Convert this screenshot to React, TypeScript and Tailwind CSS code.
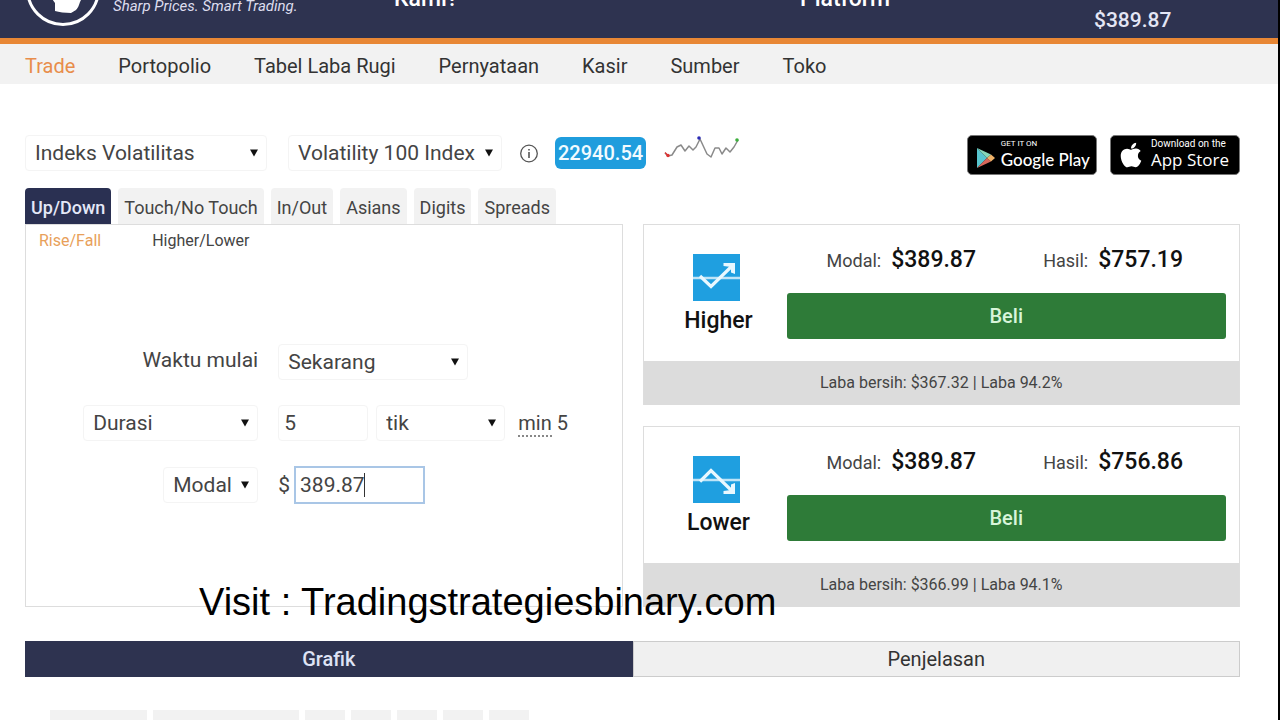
import { ReactNode } from 'react'
import clsx from 'clsx'
import { FaApple } from 'react-icons/fa'

const navigation = ['Trade', 'Portopolio', 'Tabel Laba Rugi', 'Pernyataan', 'Kasir', 'Sumber', 'Toko']

const contractTabs = ['Up/Down', 'Touch/No Touch', 'In/Out', 'Asians', 'Digits', 'Spreads']

const contracts = [
  { name: 'Higher', stake: '$389.87', payout: '$757.19', profit: '$367.32', percent: '94.2%' },
  { name: 'Lower', stake: '$389.87', payout: '$756.86', profit: '$366.99', percent: '94.1%' },
]

const chartTools = [
  { name: 'Interval', width: 'w-[97px]' },
  { name: 'Chart type', width: 'w-[146px]' },
  { name: 'Indicators', width: 'w-10' },
  { name: 'Overlay', width: 'w-10' },
  { name: 'Draw', width: 'w-10' },
  { name: 'Export', width: 'w-10' },
  { name: 'Table', width: 'w-10' },
]

function Select({ id, label, value, className }: { id: string; label: string; value: string; className: string }) {
  return (
    <div className={clsx('relative', className)}>
      <select
        id={id}
        aria-label={label}
        className="block h-9 w-full appearance-none rounded-sm border border-[#f4f4f4] bg-white pl-[9px] pr-6 text-[21px] leading-8 text-[#444] outline-none"
      >
        <option>{value}</option>
      </select>
      <svg className="pointer-events-none absolute right-[9px] top-[14px] h-2 w-2" viewBox="0 0 8 8">
        <path d="M0 0.5h8L4 7.5z" fill="#111" />
      </svg>
    </div>
  )
}

function Logo() {
  return (
    <svg className="h-[74px] w-[74px] shrink-0" viewBox="0 0 74 74" fill="none">
      <circle cx="37" cy="37" r="35.5" stroke="#fff" strokeWidth="3" />
      <path
        d="M22 30c8-6 30-6 35 4-1 8-1 13-3 16-1 3-2 6-4 8l-5 3c-6 0-12-1-16-2l0-8c-4-5-7-12-7-21z"
        fill="#fff"
      />
    </svg>
  )
}

function Sparkline() {
  return (
    <svg className="h-6 w-[76px]" viewBox="0 0 76 24" fill="none">
      <path
        d="M1 18l3 3 4-1 5-8 4-2 4 6 4-5 4 4 3-3 4-8 7 15 4 3 4-9 4 0 3 6 4-6 4 4 4-5 4-7"
        stroke="#8a8a8a"
        strokeWidth="1.5"
        strokeLinejoin="round"
      />
      <path d="M1 17.5l3 3" stroke="#d33" strokeWidth="1.3" />
      <circle cx="4" cy="20.5" r="1.7" fill="#d33" />
      <circle cx="35" cy="3" r="1.8" fill="#2b2bb5" />
      <circle cx="73" cy="5" r="1.8" fill="#3cae3c" />
    </svg>
  )
}

function ContractIcon({ name }: { name: string }) {
  return (
    <svg className="mr-1 h-[47px] w-[47px]" viewBox="0 0 47 47" fill="none">
      <path d="M0 0h47v47H0z" fill="#1f9fe0" />
      <path d="M0 24h47" stroke="#bfe4f7" strokeWidth="2.4" />
      {name === 'Higher' ? (
        <>
          <path d="M7 22l11 10.5L39 12" stroke="#e9f8ff" strokeWidth="3.2" />
          <path d="M30.500 9H42v11l-4-1.500V13l-7.500-1z" fill="#e9f8ff" />
        </>
      ) : (
        <>
          <path d="M7 25.500l11-11L39 35" stroke="#e9f8ff" strokeWidth="3.2" />
          <path d="M30.500 38H42V27l-4 1.500V34l-7.500 1z" fill="#e9f8ff" />
        </>
      )}
    </svg>
  )
}

function StoreLink({ caption, name, captionClass, nameClass, children }: { caption: string; name: string; captionClass: string; nameClass: string; children: ReactNode }) {
  return (
    <a href="#" className="flex h-10 items-center rounded-[5px] border border-[#777] bg-black text-white">
      {children}
      <span className="flex flex-col">
        <span className={captionClass}>{caption}</span>
        <span className={nameClass}>{name}</span>
      </span>
    </a>
  )
}

export default function App() {
  return (
    <div className="relative h-screen overflow-hidden border-r-2 border-black bg-white font-[Roboto,sans-serif] text-[#333]">
      <header className="flex h-11 items-end overflow-hidden border-b-6 border-[#e88735] bg-[#2e3350] text-white">
        <div className="flex w-[394px] shrink-0 items-end pb-3 pl-[26px]">
          <Logo />
          <p className="pb-3 pl-[13px] text-[15px] leading-4 italic text-[#dde]">Sharp Prices. Smart Trading.</p>
        </div>
        <a href="#" className="w-[406px] pb-[25px] text-[23px] leading-7 font-medium">Kami?</a>
        <a href="#" className="w-[294px] pb-[25px] text-[23px] leading-7 font-medium">Platform</a>
        <span className="pb-[6px] text-[21px] leading-6 font-medium text-[#e4e6f5]">$389.87</span>
      </header>

      <nav className="flex gap-[43px] bg-[#f2f2f2] px-[25px] pt-2 pb-1">
        {navigation.map((item) => (
          <a
            key={item}
            href="#"
            className={clsx('text-xl leading-7', item === 'Trade' ? 'text-[#e88d4b]' : 'text-[#333]')}
          >
            {item}
          </a>
        ))}
      </nav>

      <main className="pt-[51px] pr-[38px] pl-[25px]">
        {/* Market picker */}
        <div className="flex h-10 items-start justify-between">
          <div className="flex h-9 items-center">
            <Select id="market" label="Market" value="Indeks Volatilitas" className="w-[242px]" />
            <Select id="underlying" label="Underlying" value="Volatility 100 Index" className="ml-[21px] w-[214px]" />
            <svg className="ml-[17px] h-5 w-5" viewBox="0 0 20 20" fill="none" stroke="#555">
              <circle cx="10" cy="10.500" r="8.300" strokeWidth="1.3" />
              <path d="M10 9v6M10 6v1.500" strokeWidth="1.6" />
            </svg>
            <span className="ml-4 rounded-md bg-[#1f9ddd] px-[3px] text-xl leading-8 font-medium text-[#f2fbff]">22940.54</span>
            <div className="ml-[18px] pb-3">
              <Sparkline />
            </div>
          </div>
          <div className="flex gap-[13px]">
            <StoreLink
              caption="GET IT ON"
              name="Google Play"
              captionClass="text-[8px] leading-[10px]"
              nameClass="font-[Lato,sans-serif] text-[17px] leading-[22px] font-medium pr-[6px]"
            >
              <svg className="mt-[6px] mr-[5px] ml-2 h-[22px] w-5" viewBox="0 0 20 22">
                <path d="M1 1v20l10-10z" fill="#58c5cf" />
                <path d="M1 1l10 10 4-3.500z" fill="#86d7b8" />
                <path d="M1 21l10-10 4 3.500z" fill="#d9665a" />
                <path d="M15 7.500l4 3.500-4 3.500-4-3.500z" fill="#f0b269" />
              </svg>
            </StoreLink>
            <StoreLink
              caption="Download on the"
              name="App Store"
              captionClass="text-[10px] leading-[10px]"
              nameClass="font-['Open_Sans',sans-serif] text-[17px] leading-[22px] font-medium pr-[10px]"
            >
              <FaApple className="mx-2 h-7 w-6" />
            </StoreLink>
          </div>
        </div>

        {/* Contract types */}
        <div className="mt-[13px] flex gap-[7px]">
          {contractTabs.map((tab, i) => (
            <button
              key={tab}
              className={clsx(
                'h-9 rounded-t-[4px] px-[6px] pt-1 text-lg',
                i === 0 ? 'bg-[#2a3052] font-medium text-[#e4e8f8]' : 'bg-[#f2f2f2] text-[#444]',
              )}
            >
              {tab}
            </button>
          ))}
        </div>

        <div className="grid grid-cols-2 gap-5">
          <section className="border border-[#ddd]">
            <div className="flex gap-[51px] px-[13px] pt-[6px] text-base leading-5">
              <a href="#" className="text-[#e8a05a]">Rise/Fall</a>
              <a href="#" className="text-[#444]">Higher/Lower</a>
            </div>

            <form className="mt-[93px] flex flex-col gap-[25px] text-[21px] leading-7 text-[#444]">
              <div className="grid grid-cols-[39%_1fr] items-center gap-5">
                <label htmlFor="start" className="pb-1 text-right">Waktu mulai</label>
                <Select id="start" label="Waktu mulai" value="Sekarang" className="w-[190px]" />
              </div>
              <div className="grid grid-cols-[39%_1fr] items-center gap-5">
                <Select id="expiry" label="Durasi" value="Durasi" className="ml-auto w-[175px]" />
                <div className="flex items-center">
                  <input
                    aria-label="Durasi"
                    defaultValue="5"
                    className="h-9 w-[90px] rounded-sm border border-[#f4f4f4] px-[5px] outline-none"
                  />
                  <Select id="unit" label="Unit" value="tik" className="ml-2 w-[129px]" />
                  <span className="ml-[13px] text-xl leading-7">
                    <span className="border-b-2 border-dotted border-[#888]">min</span> 5
                  </span>
                </div>
              </div>
              <div className="grid grid-cols-[39%_1fr] items-center gap-5">
                <Select id="basis" label="Modal" value="Modal" className="ml-auto w-[95px]" />
                <div className="flex items-center">
                  <label htmlFor="amount">$</label>
                  <div className="relative ml-1">
                    <input
                      id="amount"
                      defaultValue="389.87"
                      className="block h-[38px] w-[131px] border-2 border-[#a9c6e6] px-1 outline-none"
                    />
                    <span className="absolute top-[7px] left-[70px] h-6 w-px bg-[#333]" />
                  </div>
                </div>
              </div>
            </form>
          </section>

          <div className="flex flex-col gap-[21px]">
            {contracts.map((c) => (
              <section key={c.name} className="border border-[#ddd] border-b-[#dcdcdc]">
                <div className="flex items-start gap-[6px] px-[13px] pt-[21px] pb-[22px]">
                  <div className="flex w-[124px] shrink-0 flex-col items-center pt-2">
                    <ContractIcon name={c.name} />
                    <h2 className="mt-1 text-[23px] leading-8 font-medium text-[#111]">{c.name}</h2>
                  </div>
                  <div className="flex-1">
                    <div className="flex justify-between pr-[43px] pl-10 text-lg leading-7 text-[#444]">
                      <p className="flex items-baseline gap-[10px]">
                        Modal: <strong className="text-[23px] leading-7 font-medium text-[#111]">{c.stake}</strong>
                      </p>
                      <p className="flex items-baseline gap-[10px]">
                        Hasil: <strong className="text-[23px] leading-7 font-medium text-[#111]">{c.payout}</strong>
                      </p>
                    </div>
                    <button className="mt-[18px] block h-[46px] w-full rounded-[3px] bg-[#2e7b38] text-xl font-medium text-[#d8f5da]">
                      Beli
                    </button>
                  </div>
                </div>
                <p className="bg-[#dcdcdc] text-center text-base leading-[43px] text-[#444]">
                  Laba bersih: {c.profit} | Laba {c.percent}
                </p>
              </section>
            ))}
          </div>
        </div>

        {/* Analysis tabs */}
        <div className="mt-[34px] grid grid-cols-2 text-xl">
          <button className="h-9 bg-[#2e3350] font-medium text-[#dfe3f5]">Grafik</button>
          <button className="h-9 border border-[#ccc] bg-[#f0f0f0] text-[#333]">Penjelasan</button>
        </div>

        <div className="mt-[33px] flex gap-[6px] pl-[25px]">
          {chartTools.map((tool) => (
            <button key={tool.name} aria-label={tool.name} className={clsx('h-8 bg-[#f2f2f2]', tool.width)} />
          ))}
        </div>
      </main>

      <p className="absolute top-[580px] left-[199px] font-['Liberation_Sans',sans-serif] text-[38px] leading-[44px] whitespace-nowrap text-black">
        Visit : Tradingstrategiesbinary.com
      </p>
    </div>
  )
}
